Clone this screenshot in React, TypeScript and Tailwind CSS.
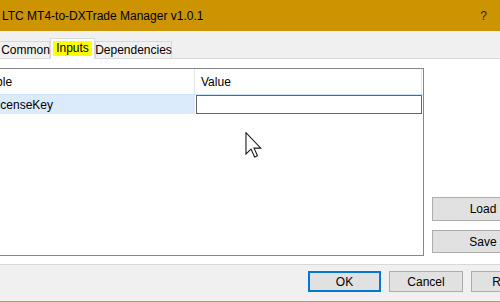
import React from "react";

export default function App() {
  const font = { fontFamily: '"Liberation Sans", Arial, sans-serif' };
  return (
    <div
      className="relative w-[500px] h-[302px] overflow-hidden bg-[#f0f0f0] flex flex-col text-[12px] text-black"
      style={font}
    >
      {/* Title bar */}
      <div className="h-[31px] shrink-0 bg-[#cc9400] flex items-center justify-between pl-[2px] pr-[13px]">
        <span className="text-[12px] text-black">LTC MT4-to-DXTrade Manager v1.0.1</span>
        <span className="text-[12px] text-[#3a1a00]">?</span>
      </div>

      {/* Tabs strip */}
      <div className="h-[27px] shrink-0 flex items-end">
        <div className="shrink-0 h-[17px] w-[51px] -ml-[1px] border border-b-0 border-[#d9d9d9] bg-[#f0f0f0] flex items-center justify-center pl-[2px]">
          Common
        </div>
        <div className="shrink-0 h-[21px] w-[45px] -mb-[1px] border border-b-0 border-[#d9d9d9] bg-white flex items-start justify-center pt-[2px] relative z-10">
          <span className="bg-[#ffff00] px-[3px] leading-[15px] h-[15px]">Inputs</span>
        </div>
        <div className="shrink-0 h-[17px] w-[77px] border border-b-0 border-[#d9d9d9] bg-[#f0f0f0] flex items-center justify-center">
          Dependencies
        </div>
      </div>

      {/* Tab page */}
      <div className="h-[207px] shrink-0 bg-white border-t border-b border-[#d9d9d9] flex">
        <div className="shrink-0 -ml-[1px] mt-[9px] w-[425px] h-[188px] border border-[#828790] flex flex-col">
          {/* header */}
          <div className="h-[25px] shrink-0 flex">
            <div className="shrink-0 w-[195px] border-r border-[#e5e5e5] flex items-center overflow-hidden whitespace-nowrap">
              <span className="-ml-[31px]">Variable</span>
            </div>
            <div className="flex-1 flex items-center pl-[6px] border-r border-[#e5e5e5] mr-[1px]">
              Value
            </div>
          </div>
          {/* row */}
          <div className="h-[20px] shrink-0 flex border-t border-[#cde3f7]">
            <div className="shrink-0 w-[195px] bg-[#dcebfc] flex items-center overflow-hidden whitespace-nowrap">
              <span className="-ml-[9px]">LicenseKey</span>
            </div>
            <div className="shrink-0 w-[1px] bg-white" />
            <div className="shrink-0 w-[226px] h-[19px] border border-[#646464] bg-white" />
          </div>
        </div>
        <div className="shrink-0 flex flex-col pl-[8px] pt-[138px] gap-[9px]">
          <button className="w-[102px] h-[24px] border border-[#adadad] bg-[#e1e1e1] flex items-center justify-center">
            Load
          </button>
          <button className="w-[102px] h-[23px] border border-[#adadad] bg-[#e1e1e1] flex items-center justify-center">
            Save
          </button>
        </div>
      </div>

      {/* Bottom bar */}
      <div className="flex-1 flex items-start pt-[6px] pl-[308px] gap-[8px]">
        <button className="w-[73px] h-[21px] border-2 border-[#0078d7] bg-[#e1e1e1] flex items-center justify-center shrink-0">
          OK
        </button>
        <button className="w-[74px] h-[21px] border border-[#adadad] bg-[#e1e1e1] flex items-center justify-center shrink-0">
          Cancel
        </button>
        <button className="w-[74px] h-[21px] border border-[#adadad] bg-[#e1e1e1] flex items-center justify-center shrink-0">
          Reset
        </button>
      </div>
      <div className="h-[1px] shrink-0 bg-[#cc9a30]" />

      {/* Mouse cursor */}
      <svg
        className="absolute left-[245px] top-[132px]"
        width="17"
        height="26"
        viewBox="0 0 12 19"
      >
        <path
          d="M0.5 0.5 L0.5 16 L4.2 12.5 L6.8 18.3 L8.9 17.4 L6.4 11.8 L11.3 11.8 Z"
          fill="white"
          stroke="#1a1a1a"
          strokeWidth="0.8"
          strokeLinejoin="miter"
        />
      </svg>
    </div>
  );
}
